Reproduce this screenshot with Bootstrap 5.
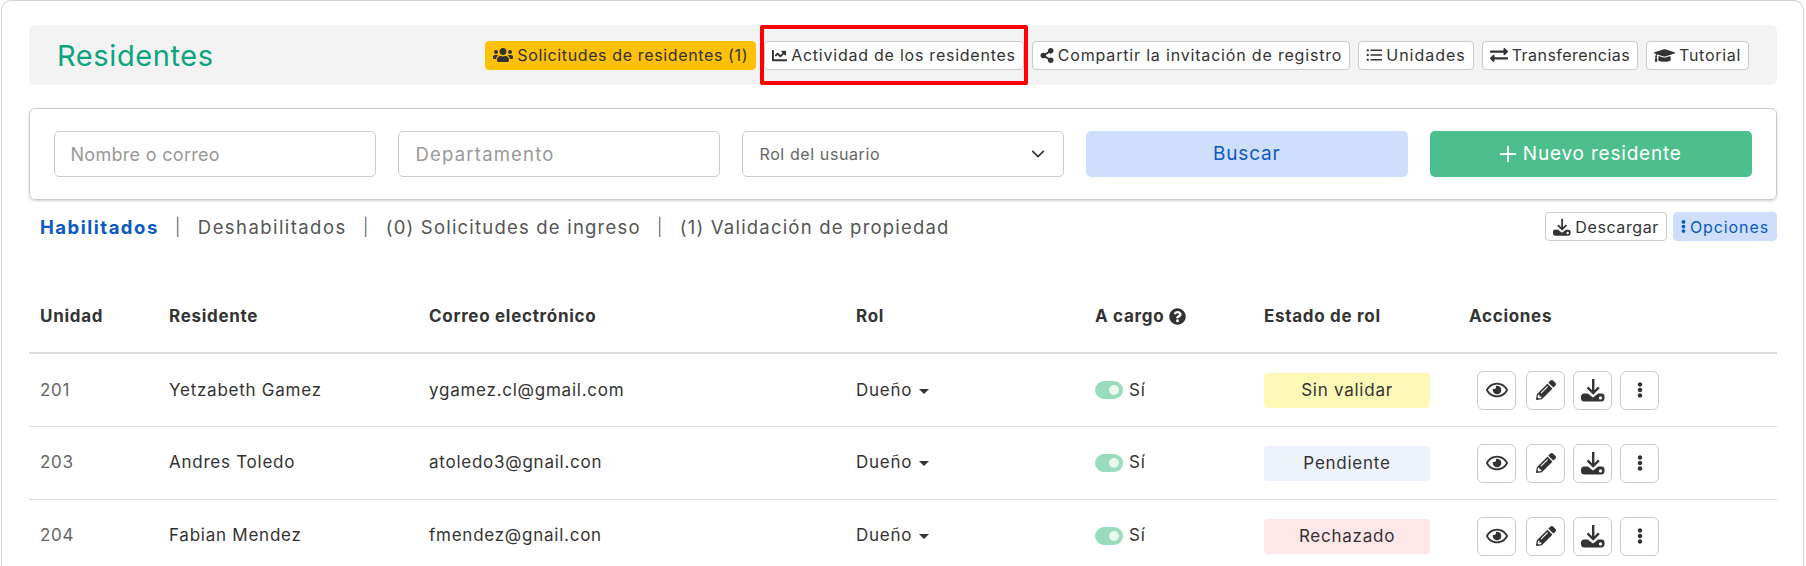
<!DOCTYPE html>
<html lang="es">
<head>
<meta charset="utf-8">
<title>Residentes</title>
<link href="https://cdn.jsdelivr.net/npm/bootstrap@5.3.0/dist/css/bootstrap.min.css" rel="stylesheet">
<style>
html,body{height:566px;overflow:hidden;background:#fff}
body{font-family:Inter,"Noto Sans",sans-serif;color:#333;font-size:15px;padding:0 2px 0 1px}
svg{fill:currentColor;flex:none}
.shell{border:1px solid #d2d2d2;border-bottom:0;border-radius:10px 10px 0 0;padding:24px 26px 0 27px;height:600px}
.headband{position:relative;background:#f3f3f3;border-radius:6px;height:60px;padding:0 28px 0 28px;margin-bottom:23px}
.pagetitle{color:#0aa57f;font-size:29px;line-height:1;font-weight:400;margin:0;letter-spacing:.6px}
.tool{display:inline-flex;align-items:center;gap:4px;height:29px;padding:0 7px;font-size:16px;line-height:1;letter-spacing:.63px;color:#333;background:#fff;border:1px solid #ccc;border-radius:4px;white-space:nowrap}
.tool:hover{background:#fff;color:#333;border-color:#ccc}
.tool.warnbtn,.tool.warnbtn:hover{background:#ffc107;border-color:#ffc107}
.tool.softbtn,.tool.softbtn:hover{background:#cfdffb;border-color:#cfdffb;color:#0b5ac2}
.tool.sp-m{letter-spacing:.76px}
.tool.sp-l{letter-spacing:.82px}
.tool.sp-xl{letter-spacing:.98px}
.tool.sp-s{letter-spacing:.45px}
.tool.sp-t{letter-spacing:.7px}
.tool.sp-d{letter-spacing:.6px}
.tool.sp-o{letter-spacing:.9px}
.redbox{position:absolute;left:731px;top:0;width:268px;height:60px;border:4px solid #f00;border-radius:2px;pointer-events:none}
.filterbox{border:1px solid #ccc;border-radius:6px;box-shadow:0 1px 3px rgba(0,0,0,.18);height:92px;padding:0 24px 0 23.500px;display:grid;grid-template-columns:repeat(5,minmax(0,1fr));gap:21.500px;align-items:center}
.fld{height:46px;font-size:18px;letter-spacing:.3px;color:#333;border-color:#ccc;border-radius:5px;padding-left:16px}
.fld.fldwide{font-size:18.500px;letter-spacing:1.200px;padding-left:17px}
.fld::placeholder{color:#999;opacity:1}
.fldsel{height:46px;font-size:16px;letter-spacing:.6px;color:#666;border-color:#ccc;border-radius:5px;padding-left:17px;background-position:right 16px center;background-size:18px 14px}
.bigbtn{height:46px;font-size:19px;letter-spacing:.8px;border:0;border-radius:5px;display:flex;align-items:center;justify-content:center;gap:7px;padding:0}
.bigbtn.blue,.bigbtn.blue:hover{background:#cfdffb;color:#0b5ac2}
.bigbtn.green,.bigbtn.green:hover{background:#4dbf8c;color:#fff}
.tabsrow{height:30px;margin-top:12px;margin-bottom:0}
.tabs{padding-left:11px;font-size:18.500px;letter-spacing:1.200px;color:#555;gap:16.300px;margin-top:2px}
.tabs a{color:#555;text-decoration:none}
.tabs a.on{color:#0b5ac2;font-weight:700;letter-spacing:1.500px}
.tabs a.sparse{letter-spacing:1.430px}
.tabsep{color:#555;font-weight:300;font-size:17px}
.sidebtns{gap:6px}
.restable{table-layout:fixed;width:100%;margin:0;font-size:17px;letter-spacing:.75px;color:#333;--bs-table-color:#333}
.restable th{font-weight:700;letter-spacing:.7px;height:111px;padding:0 0 0 11px;vertical-align:middle;border-bottom:2px solid #ddd;padding-top:39px}
.restable td{height:73px;padding:1px 0 0 11px;vertical-align:middle;border-bottom:1px solid #ddd}
.unitcell{color:#666}
.caretmark{display:inline-block;width:0;height:0;border:5px solid transparent;border-top-color:#333;border-bottom:0;margin-left:7px;vertical-align:2px}
.togglewrap{display:flex;align-items:center;gap:6px}
.switchy{width:28px;height:18px;border-radius:9px;background:#98dcbb;position:relative;display:inline-block}
.switchy::after{content:"";position:absolute;right:4px;top:4px;width:10px;height:10px;border-radius:50%;background:#e9f7f0}
.rolestate{display:block;width:166px;height:35px;line-height:35px;text-align:center;border-radius:4px}
.st-y{background:#fff9b8}.st-b{background:#edf2fd}.st-r{background:#ffe6e8}
.acts{display:flex;gap:10px;padding-left:8px}
.actbtn{width:39px;height:39px;border:1px solid #ccc;border-radius:6px;background:#fff;display:flex;align-items:center;justify-content:center;padding:0;color:#333}
.actbtn:nth-child(3){width:39px;margin-left:-2px}.actbtn:nth-child(4){margin-left:-2px}
.helpmark{vertical-align:-3px;margin-left:5px}
.col-a{width:129px}.col-b{width:260px}.col-c{width:427px}.col-d{width:239px}.col-e{width:169px}.col-f{width:205px}
</style>
</head>
<body>
<svg width="0" height="0" style="position:absolute">
<defs>
<symbol id="i-users" viewBox="0 0 640 512"><path d="M96 224c35.3 0 64-28.7 64-64s-28.7-64-64-64-64 28.7-64 64 28.7 64 64 64zm448 0c35.3 0 64-28.7 64-64s-28.7-64-64-64-64 28.7-64 64 28.7 64 64 64zm32 32h-64c-17.6 0-33.5 7.1-45.1 18.6 40.3 22.1 68.9 62 75.1 109.4h66c17.7 0 32-14.3 32-32v-32c0-35.3-28.7-64-64-64zm-256 0c61.9 0 112-50.1 112-112S381.9 32 320 32 208 82.1 208 144s50.1 112 112 112zm76.8 32h-8.3c-20.8 10-43.9 16-68.5 16s-47.6-6-68.5-16h-8.3C179.6 288 128 339.6 128 403.2V432c0 26.5 21.5 48 48 48h288c26.5 0 48-21.5 48-48v-28.8c0-63.6-51.6-115.2-115.2-115.2zm-223.7-13.4C161.5 263.1 145.6 256 128 256H64c-35.3 0-64 28.7-64 64v32c0 17.7 14.3 32 32 32h65.9c6.3-47.4 34.9-87.3 75.2-109.4z"/></symbol>
<symbol id="i-chart" viewBox="0 0 512 512"><path d="M496 384H64V80c0-8.84-7.16-16-16-16H16C7.16 64 0 71.16 0 80v336c0 17.67 14.33 32 32 32h464c8.84 0 16-7.16 16-16v-32c0-8.84-7.16-16-16-16zM464 96H345.94c-21.38 0-32.09 25.85-16.97 40.97l32.4 32.4L288 242.75l-73.37-73.37c-12.5-12.5-32.76-12.5-45.25 0l-68.69 68.69c-6.25 6.25-6.25 16.38 0 22.63l22.62 22.62c6.25 6.25 16.38 6.25 22.63 0L192 237.25l73.37 73.37c12.5 12.5 32.76 12.5 45.25 0l96-96 32.4 32.4c15.12 15.12 40.97 4.41 40.97-16.97V112c.01-8.84-7.15-16-16-16z"/></symbol>
<symbol id="i-share" viewBox="0 0 448 512"><path d="M352 320c-22.608 0-43.387 7.819-59.79 20.895l-102.486-64.054a96.551 96.551 0 0 0 0-41.683l102.486-64.054C308.613 184.181 329.392 192 352 192c53.019 0 96-42.981 96-96S405.019 0 352 0s-96 42.981-96 96c0 7.158.79 14.13 2.276 20.841L155.79 180.895C139.387 167.819 118.608 160 96 160c-53.019 0-96 42.981-96 96s42.981 96 96 96c22.608 0 43.387-7.819 59.79-20.895l102.486 64.054A96.301 96.301 0 0 0 256 416c0 53.019 42.981 96 96 96s96-42.981 96-96-42.981-96-96-96z"/></symbol>
<symbol id="i-list" viewBox="0 0 512 512"><path d="M24 72h64v64H24zM24 224h64v64H24zM24 376h64v64H24zM144 80h368v48H144zM144 232h368v48H144zM144 384h368v48H144z"/></symbol>
<symbol id="i-swap" viewBox="0 0 512 512"><path d="M0 168v-16c0-13.255 10.745-24 24-24h360V80c0-21.367 25.899-32.042 40.971-16.971l80 80c9.372 9.373 9.372 24.569 0 33.941l-80 80C409.956 271.982 384 261.456 384 240v-48H24c-13.255 0-24-10.745-24-24zm488 152H128v-48c0-21.314-25.862-32.08-40.971-16.971l-80 80c-9.372 9.373-9.372 24.569 0 33.941l80 80C102.057 463.997 128 453.437 128 432v-48h360c13.255 0 24-10.745 24-24v-16c0-13.255-10.745-24-24-24z"/></symbol>
<symbol id="i-cap" viewBox="0 0 640 512"><path d="M622.34 153.2L343.4 67.5c-15.2-4.67-31.6-4.67-46.79 0L17.66 153.2c-23.54 7.23-23.54 38.36 0 45.59l48.63 14.94c-10.67 13.19-17.23 29.28-17.88 46.9C38.78 266.15 32 276.11 32 288c0 10.78 5.68 19.85 13.86 25.65L20.33 428.53C18.11 438.52 25.71 448 35.94 448h56.11c10.24 0 17.84-9.48 15.62-19.47L82.14 313.65C90.32 307.85 96 298.78 96 288c0-11.57-6.47-21.25-15.66-26.87.76-15.02 8.44-28.3 20.69-36.72L296.6 284.5c9.06 2.78 26.44 6.25 46.79 0l278.95-85.7c23.55-7.24 23.55-38.36 0-45.6zM352.79 315.09c-28.53 8.76-52.84 3.92-65.59 0l-145.02-44.55L128 384c0 35.35 85.96 64 192 64s192-28.65 192-64l-14.18-113.47-145.03 44.56z"/></symbol>
<symbol id="i-dl" viewBox="0 0 24 24"><path d="M11 1h2.4v11.2l3.6-3.6 1.7 1.7-6.5 6.5-6.5-6.5L7.4 8.6l3.6 3.6z"/><path fill-rule="evenodd" d="M3.5 15.5h3.2l5.3 4 5.3-4h3.2a3 3 0 0 1 3 3v1.5a3.5 3.5 0 0 1-3.5 3.5H3.500a3.500 3.500 0 0 1-3.500-3.500V18.500a3 3 0 0 1 3.500-3zM19.500 18.300a1.600 1.600 0 1 0 0 3.200 1.600 1.600 0 0 0 0-3.200z"/></symbol>
<symbol id="i-dots" viewBox="0 0 192 512"><path d="M96 184c39.8 0 72 32.200 72 72s-32.200 72-72 72-72-32.200-72-72 32.200-72 72-72zM24 80c0 39.800 32.200 72 72 72s72-32.200 72-72S135.800 8 96 8 24 40.200 24 80zm0 352c0 39.800 32.200 72 72 72s72-32.200 72-72-32.200-72-72-72-72 32.200-72 72z"/></symbol>
<symbol id="i-eye" viewBox="0 0 576 512"><path d="M288 144a110.940 110.940 0 0 0-31.240 5 55.400 55.400 0 0 1 7.240 27 56 56 0 0 1-56 56 55.400 55.400 0 0 1-27-7.240A111.710 111.710 0 1 0 288 144zm284.520 97.400C518.290 135.590 410.930 64 288 64S57.680 135.640 3.480 241.410a32.350 32.350 0 0 0 0 29.190C57.710 376.410 165.070 448 288 448s230.320-71.640 284.520-177.41a32.350 32.350 0 0 0 0-29.190zM288 400c-98.650 0-189.090-55-237.930-144C98.910 167 189.340 112 288 112s189.090 55 237.930 144C477.100 345 386.660 400 288 400z"/></symbol>
<symbol id="i-pen" viewBox="0 0 512 512"><path d="M497.900 142.100l-46.100 46.100c-4.700 4.700-12.300 4.700-17 0l-111-111c-4.700-4.700-4.700-12.300 0-17l46.100-46.100c18.700-18.700 49.100-18.700 67.900 0l60.100 60.100c18.800 18.700 18.800 49.100 0 67.900zM284.200 99.800L21.600 362.400.4 483.900c-2.900 16.400 11.400 30.600 27.800 27.800l121.500-21.300 262.600-262.600c4.700-4.700 4.700-12.300 0-17l-111-111c-4.800-4.700-12.400-4.700-17.100 0zM124.100 339.900c-5.500-5.500-5.500-14.300 0-19.800l154-154c5.500-5.500 14.300-5.500 19.800 0s5.500 14.300 0 19.800l-154 154c-5.500 5.500-14.300 5.500-19.800 0zM88 424h48v36.300l-64.500 11.300-31.100-31.100L51.700 376H88v48z"/></symbol>
<symbol id="i-help" viewBox="0 0 512 512"><path d="M504 256c0 136.997-111.043 248-248 248S8 392.997 8 256C8 119.083 119.043 8 256 8s248 111.083 248 248zM262.655 90c-54.497 0-89.255 22.957-116.549 63.758-3.536 5.286-2.353 12.415 2.715 16.258l34.699 26.310c5.205 3.947 12.621 3.008 16.665-2.122 17.864-22.658 30.113-35.797 57.303-35.797 20.429 0 45.698 13.148 45.698 32.958 0 14.976-12.363 22.667-32.534 33.976C247.128 238.528 216 254.941 216 296v4c0 6.627 5.373 12 12 12h56c6.627 0 12-5.373 12-12v-1.333c0-28.462 83.186-29.647 83.186-106.667 0-58.002-60.165-102-116.531-102zM256 338c-25.365 0-46 20.635-46 46 0 25.364 20.635 46 46 46s46-20.636 46-46c0-25.365-20.635-46-46-46z"/></symbol>
</defs>
</svg>

<div class="shell">
  <div class="headband d-flex align-items-center justify-content-between">
    <h1 class="pagetitle">Residentes</h1>
    <div class="d-flex gap-2">
      <a class="btn tool warnbtn"><svg width="20" height="16"><use href="#i-users"/></svg>Solicitudes de residentes (1)</a>
      <a class="btn tool sp-m"><svg width="15" height="15"><use href="#i-chart"/></svg>Actividad de los residentes</a>
      <a class="btn tool sp-l"><svg width="14" height="15"><use href="#i-share"/></svg>Compartir la invitación de registro</a>
      <a class="btn tool sp-xl"><svg width="16" height="16"><use href="#i-list"/></svg>Unidades</a>
      <a class="btn tool sp-s"><svg width="18" height="18"><use href="#i-swap"/></svg>Transferencias</a>
      <a class="btn tool sp-t"><svg width="21" height="17"><use href="#i-cap"/></svg>Tutorial</a>
    </div>
    <div class="redbox"></div>
  </div>

  <div class="filterbox">
    <input class="form-control fld" type="text" placeholder="Nombre o correo">
    <input class="form-control fld fldwide" type="text" placeholder="Departamento">
    <select class="form-select fldsel"><option>Rol del usuario</option></select>
    <button class="btn bigbtn blue" type="button">Buscar</button>
    <button class="btn bigbtn green" type="button"><svg width="16" height="16" viewBox="0 0 16 16"><path d="M7 0h2v7h7v2H9v7H7V9H0V7h7z"/></svg>Nuevo residente</button>
  </div>

  <div class="tabsrow d-flex align-items-center justify-content-between">
    <div class="tabs d-flex align-items-center">
      <a class="on" href="#">Habilitados</a><span class="tabsep">|</span>
      <a class="sparse" href="#">Deshabilitados</a><span class="tabsep">|</span>
      <a href="#">(0) Solicitudes de ingreso</a><span class="tabsep">|</span>
      <a href="#">(1) Validación de propiedad</a>
    </div>
    <div class="d-flex sidebtns align-self-start">
      <a class="btn tool sp-d"><svg width="18" height="18"><use href="#i-dl"/></svg>Descargar</a>
      <a class="btn tool softbtn sp-o"><svg width="5" height="15"><use href="#i-dots"/></svg>Opciones</a>
    </div>
  </div>

  <table class="table restable">
    <colgroup><col class="col-a"><col class="col-b"><col class="col-c"><col class="col-d"><col class="col-e"><col class="col-f"><col></colgroup>
    <thead>
      <tr><th>Unidad</th><th>Residente</th><th>Correo electrónico</th><th>Rol</th><th>A cargo<svg class="helpmark" width="17" height="17"><use href="#i-help"/></svg></th><th>Estado de rol</th><th>Acciones</th></tr>
    </thead>
    <tbody>
      <tr><td class="unitcell">201</td><td>Yetzabeth Gamez</td><td>ygamez.cl@gmail.com</td><td>Dueño<span class="caretmark"></span></td><td><span class="togglewrap"><span class="switchy"></span>Sí</span></td><td><span class="rolestate st-y">Sin validar</span></td><td><div class="acts"><button class="actbtn"><svg width="22" height="20"><use href="#i-eye"/></svg></button><button class="actbtn"><svg width="20" height="20"><use href="#i-pen"/></svg></button><button class="actbtn"><svg width="24" height="24"><use href="#i-dl"/></svg></button><button class="actbtn"><svg width="6" height="18"><use href="#i-dots"/></svg></button></div></td></tr>
      <tr><td class="unitcell">203</td><td>Andres Toledo</td><td>atoledo3@gnail.con</td><td>Dueño<span class="caretmark"></span></td><td><span class="togglewrap"><span class="switchy"></span>Sí</span></td><td><span class="rolestate st-b">Pendiente</span></td><td><div class="acts"><button class="actbtn"><svg width="22" height="20"><use href="#i-eye"/></svg></button><button class="actbtn"><svg width="20" height="20"><use href="#i-pen"/></svg></button><button class="actbtn"><svg width="24" height="24"><use href="#i-dl"/></svg></button><button class="actbtn"><svg width="6" height="18"><use href="#i-dots"/></svg></button></div></td></tr>
      <tr><td class="unitcell">204</td><td>Fabian Mendez</td><td>fmendez@gnail.con</td><td>Dueño<span class="caretmark"></span></td><td><span class="togglewrap"><span class="switchy"></span>Sí</span></td><td><span class="rolestate st-r">Rechazado</span></td><td><div class="acts"><button class="actbtn"><svg width="22" height="20"><use href="#i-eye"/></svg></button><button class="actbtn"><svg width="20" height="20"><use href="#i-pen"/></svg></button><button class="actbtn"><svg width="24" height="24"><use href="#i-dl"/></svg></button><button class="actbtn"><svg width="6" height="18"><use href="#i-dots"/></svg></button></div></td></tr>
    </tbody>
  </table>
</div>
<script src="https://cdn.jsdelivr.net/npm/bootstrap@5.3.0/dist/js/bootstrap.bundle.min.js"></script>
</body>
</html>
